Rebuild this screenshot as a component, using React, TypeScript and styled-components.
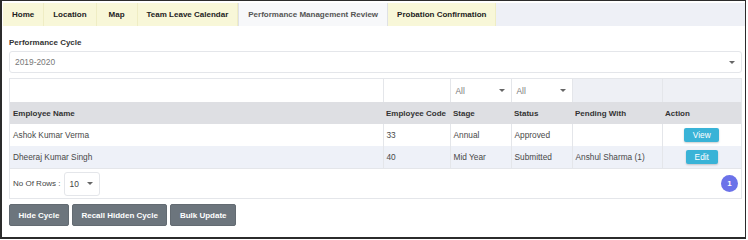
import React from "react";
import styled, { createGlobalStyle } from "styled-components";

const GlobalStyle = createGlobalStyle`
    html, body {
        margin: 0;
        padding: 0;
        background: #ffffff;
    }
    body {
        font-family: "Liberation Sans", Arial, sans-serif;
        color: #333;
    }
    * {
        box-sizing: border-box;
    }
`;

const Frame = styled.div`
    width: 746px;
    height: 239px;
    border: 1px solid #2b2b2b;
    border-left-width: 2px;
    border-bottom-width: 2px;
    padding: 2px 0 0 1px;
    background: #fff;
`;

const TabBar = styled.div`
    display: flex;
    height: 23px;
    background: #eef0f6;
`;

const Tab = styled.div<{ $active?: boolean }>`
    display: flex;
    align-items: center;
    justify-content: center;
    min-width: 41px;
    padding: 0 9px;
    font-size: 8px;
    font-weight: bold;
    color: ${(p) => (p.$active ? "#555" : "#222")};
    background: ${(p) => (p.$active ? "#f7f8fa" : "#f8f7d8")};
    border-right: 1px solid ${(p) => (p.$active ? "#dfe1e5" : "#efedc4")};
    border-left: ${(p) => (p.$active ? "1px solid #dfe1e5" : "none")};
    white-space: nowrap;
`;

const Body = styled.div`
    padding: 12px 3px 0 6px;
`;

const Label = styled.div`
    font-size: 8px;
    line-height: 10px;
    font-weight: bold;
    color: #333;
    margin-bottom: 3px;
`;

const Caret = styled.span`
    width: 0;
    height: 0;
    border-left: 3px solid transparent;
    border-right: 3px solid transparent;
    border-top: 3px solid #666;
`;

const SelectBox = styled.div<{ $w?: number; $h?: number }>`
    display: flex;
    align-items: center;
    justify-content: space-between;
    width: ${(p) => (p.$w ? `${p.$w}px` : "100%")};
    height: ${(p) => p.$h || 22}px;
    padding: 0 6px 0 5px;
    border: 1px solid #e4e6ea;
    border-radius: 3px;
    background: #fff;
    font-size: 8.4px;
    color: #777;
`;

const TableCard = styled.div`
    margin-top: 5px;
    border: 1px solid #e4e6ea;
`;

const Table = styled.table`
    width: 100%;
    border-collapse: collapse;
    table-layout: fixed;
    font-size: 8.3px;
`;

const FilterCell = styled.td<{ $muted?: boolean }>`
    height: 23px;
    padding: 0;
    background: ${(p) => (p.$muted ? "#eef0f5" : "#fff")};
    border-right: 1px solid #e4e6ea;
    &:last-child {
        border-right: none;
    }
`;

const FilterSelect = styled.div`
    display: flex;
    align-items: center;
    justify-content: space-between;
    height: 100%;
    padding: 0 6px 0 5px;
    color: #777;
`;

const HeadCell = styled.th`
    height: 22px;
    padding: 0 3px;
    text-align: left;
    font-size: 8px;
    font-weight: bold;
    color: #333;
    background: #dedfe3;
    white-space: nowrap;
`;

const Row = styled.tr<{ $alt?: boolean }>`
    background: ${(p) => (p.$alt ? "#eef1f8" : "#fff")};
`;

const Cell = styled.td<{ $center?: boolean }>`
    height: 22px;
    padding: 0 3px;
    color: #484848;
    border-right: 1px solid #e4e6ea;
    white-space: nowrap;
    text-align: ${(p) => (p.$center ? "center" : "left")};
    &:last-child {
        border-right: none;
    }
`;

const ActionButton = styled.button<{ $w: number }>`
    width: ${(p) => p.$w}px;
    height: 14px;
    padding: 0;
    border: none;
    border-radius: 2px;
    background: #39b3d7;
    color: #fff;
    font-family: inherit;
    font-size: 8.3px;
    box-shadow: 0 1px 2px rgba(0, 0, 0, 0.2);
`;

const Footer = styled.div`
    display: flex;
    align-items: center;
    justify-content: space-between;
    height: 30px;
    padding: 0 3px 0 3px;
    border-top: 1px solid #e4e6ea;
`;

const RowsPicker = styled.div`
    display: flex;
    align-items: center;
    gap: 3px;
    font-size: 8px;
    color: #444;
`;

const PageDot = styled.div`
    display: flex;
    align-items: center;
    justify-content: center;
    width: 17px;
    height: 17px;
    border-radius: 50%;
    background: #6b72e9;
    color: #fff;
    font-size: 8px;
    font-weight: bold;
`;

const ButtonRow = styled.div`
    display: flex;
    gap: 3px;
    margin-top: 5px;
`;

const GrayButton = styled.button`
    height: 22px;
    padding: 0 8.5px;
    border: 1px solid #636b72;
    border-radius: 2px;
    background: #6c757d;
    color: #fff;
    font-family: inherit;
    font-size: 8px;
    font-weight: bold;
`;

const tabs = [
    "Home",
    "Location",
    "Map",
    "Team Leave Calendar",
    "Performance Management Review",
    "Probation Confirmation",
];

const rows = [
    { name: "Ashok Kumar Verma", code: "33", stage: "Annual", status: "Approved", pending: "", action: "View" },
    { name: "Dheeraj Kumar Singh", code: "40", stage: "Mid Year", status: "Submitted", pending: "Anshul Sharma (1)", action: "Edit" },
];

const App = () => {
    return (
        <>
            <GlobalStyle />
            <Frame>
                <TabBar>
                    {tabs.map((t) => (
                        <Tab key={t} $active={t === "Performance Management Review"}>
                            {t}
                        </Tab>
                    ))}
                </TabBar>
                <Body>
                    <Label>Performance Cycle</Label>
                    <SelectBox>
                        <span>2019-2020</span>
                        <Caret />
                    </SelectBox>

                    <TableCard>
                        <Table>
                            <colgroup>
                                <col style={{ width: 373 }} />
                                <col style={{ width: 67 }} />
                                <col style={{ width: 61 }} />
                                <col style={{ width: 61 }} />
                                <col style={{ width: 90 }} />
                                <col />
                            </colgroup>
                            <tbody>
                                <tr>
                                    <FilterCell />
                                    <FilterCell />
                                    <FilterCell>
                                        <FilterSelect>
                                            <span>All</span>
                                            <Caret />
                                        </FilterSelect>
                                    </FilterCell>
                                    <FilterCell>
                                        <FilterSelect>
                                            <span>All</span>
                                            <Caret />
                                        </FilterSelect>
                                    </FilterCell>
                                    <FilterCell $muted />
                                    <FilterCell $muted />
                                </tr>
                                <tr>
                                    <HeadCell>Employee Name</HeadCell>
                                    <HeadCell>Employee Code</HeadCell>
                                    <HeadCell>Stage</HeadCell>
                                    <HeadCell>Status</HeadCell>
                                    <HeadCell>Pending With</HeadCell>
                                    <HeadCell>Action</HeadCell>
                                </tr>
                                {rows.map((r, i) => (
                                    <Row key={r.code} $alt={i % 2 === 1}>
                                        <Cell>{r.name}</Cell>
                                        <Cell>{r.code}</Cell>
                                        <Cell>{r.stage}</Cell>
                                        <Cell>{r.status}</Cell>
                                        <Cell>{r.pending}</Cell>
                                        <Cell $center>
                                            <ActionButton $w={r.action === "View" ? 35 : 32}>{r.action}</ActionButton>
                                        </Cell>
                                    </Row>
                                ))}
                            </tbody>
                        </Table>
                        <Footer>
                            <RowsPicker>
                                <span>No Of Rows :</span>
                                <SelectBox $w={36} $h={24}>
                                    <span style={{ color: "#444" }}>10</span>
                                    <Caret />
                                </SelectBox>
                            </RowsPicker>
                            <PageDot>1</PageDot>
                        </Footer>
                    </TableCard>

                    <ButtonRow>
                        <GrayButton>Hide Cycle</GrayButton>
                        <GrayButton>Recall Hidden Cycle</GrayButton>
                        <GrayButton>Bulk Update</GrayButton>
                    </ButtonRow>
                </Body>
            </Frame>
        </>
    );
};

export default App;
